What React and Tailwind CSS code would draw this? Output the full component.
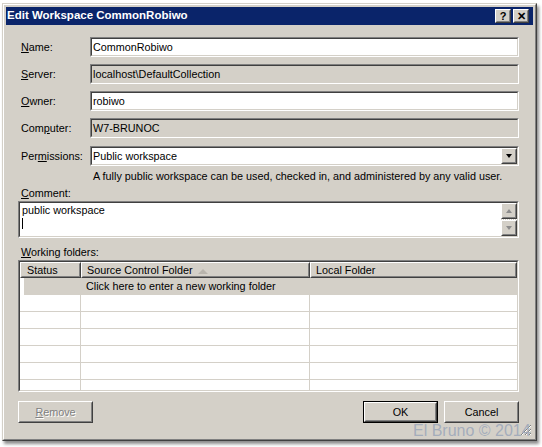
import React from 'react';

function Sunken({ className = '', inner = '', children }) {
  return (
    <div className={`border border-t-[#808080] border-l-[#808080] border-b-white border-r-white ${className}`}>
      <div className={`h-full border border-t-[#404040] border-l-[#404040] border-b-[#d4d0c8] border-r-[#d4d0c8] ${inner}`}>
        {children}
      </div>
    </div>
  );
}

function Raised({ className = '', inner = '', children }) {
  return (
    <div className={`border border-t-white border-l-white border-b-[#404040] border-r-[#404040] bg-[#d4d0c8] ${className}`}>
      <div className={`h-full border border-t-[#d4d0c8] border-l-[#d4d0c8] border-b-[#808080] border-r-[#808080] ${inner}`}>
        {children}
      </div>
    </div>
  );
}

function Field({ label, value, disabled, dropdown, mt }) {
  return (
    <div className={`flex items-center h-[20px] ${mt}`}>
      <div className="w-[72px] pl-[3px]">{label}</div>
      <Sunken className="flex-1 h-[20px]" inner={`flex items-center ${disabled ? 'bg-[#d4d0c8]' : 'bg-white'}`}>
        <span className="flex-1 pl-[1px] whitespace-nowrap">{value}</span>
        {dropdown && (
          <Raised className="w-[16px] h-full" inner="flex items-center justify-center">
            <div className="w-0 h-0 border-l-[3.5px] border-r-[3.5px] border-t-[4px] border-l-transparent border-r-transparent border-t-black" />
          </Raised>
        )}
      </Sunken>
    </div>
  );
}

function ScrollArrow({ up }) {
  return (
    <Raised className="w-[16px] h-[16px]" inner="flex items-center justify-center">
      <div
        className={`w-0 h-0 border-l-[3.5px] border-r-[3.5px] border-l-transparent border-r-transparent ${
          up ? 'border-b-[4px] border-b-[#8c8c8c]' : 'border-t-[4px] border-t-[#8c8c8c]'
        }`}
      />
    </Raised>
  );
}

export default function App() {
  const rows = [0, 1, 2, 3, 4];

  return (
    <div className="relative w-[542px] h-[447px] overflow-hidden bg-white text-[10.8px] text-black font-['Liberation_Sans',Arial,sans-serif]">
      {/* Window */}
      <div className="ml-[2px] mt-[3px] w-[535px] h-[438px] border border-t-[#d4d0c8] border-l-[#d4d0c8] border-b-[#404040] border-r-[#404040] shadow-[2px_3px_3px_rgba(0,0,0,0.45)]">
        <div className="h-full flex flex-col border border-t-white border-l-white border-b-[#808080] border-r-[#808080] bg-[#d4d0c8] p-[2px]">
          {/* Title bar */}
          <div className="h-[18px] bg-[#0a246a] flex items-center pl-[1px] pr-[4px]">
            <span className="flex-1 text-white font-bold text-[11.5px] whitespace-nowrap">Edit Workspace CommonRobiwo</span>
            <Raised className="w-[16px] h-[14px]" inner="flex items-center justify-center font-bold text-[11px] leading-none">?</Raised>
            <Raised className="ml-[2px] w-[16px] h-[14px]" inner="flex items-center justify-center font-bold text-[11px] leading-none">✕</Raised>
          </div>

          {/* Body */}
          <div className="relative flex-1 flex flex-col pt-[12px] pl-[12px] pr-[14px]">
            <Field label={<><u>N</u>ame:</>} value="CommonRobiwo" />
            <Field mt="mt-[7px]" disabled label={<><u>S</u>erver:</>} value="localhost\DefaultCollection" />
            <Field mt="mt-[7px]" label={<><u>O</u>wner:</>} value="robiwo" />
            <Field mt="mt-[7px]" disabled label={<>Com<u>p</u>uter:</>} value="W7-BRUNOC" />
            <Field mt="mt-[8px]" dropdown label={<>Per<u>m</u>issions:</>} value="Public workspace" />

            <div className="mt-[3px] h-[14px] leading-[14px] pl-[75px] whitespace-nowrap">
              A fully public workspace can be used, checked in, and administered by any valid user.
            </div>

            <div className="mt-[3px] h-[14px] leading-[14px] pl-[3px]">
              <u>C</u>omment:
            </div>
            <Sunken className="mt-[1px] h-[37px]" inner="flex bg-white">
              <div className="flex-1 pl-[2px] pt-[1px] leading-[13px]">
                <div>public workspace</div>
                <div className="w-[1px] h-[11px] bg-black mt-[1px]" />
              </div>
              <div className="w-[16px] flex flex-col">
                <ScrollArrow up />
                <div className="flex-1 bg-[repeating-conic-gradient(#ffffff_0_25%,#d4d0c8_0_50%)] bg-[length:2px_2px]" />
                <ScrollArrow />
              </div>
            </Sunken>

            <div className="mt-[7px] h-[14px] leading-[14px] pl-[3px]">
              <u>W</u>orking folders:
            </div>
            <Sunken className="mt-[1px] h-[132px]" inner="flex flex-col bg-white overflow-hidden">
              {/* Header */}
              <div className="flex h-[16px] shrink-0">
                <Raised className="w-[61px]" inner="pl-[5px] leading-[13px]">Status</Raised>
                <Raised className="w-[229px]" inner="relative pl-[4px] leading-[13px]">
                  Source Control Folder
                  <div className="absolute left-[115px] top-[5px] w-0 h-0 border-l-[5px] border-r-[5px] border-b-[5px] border-l-transparent border-r-transparent border-b-[#b8b4ac]" />
                </Raised>
                <Raised className="flex-1" inner="pl-[4px] leading-[13px]">Local Folder</Raised>
              </div>
              {/* New row */}
              <div className="flex h-[17px] shrink-0">
                <div className="w-[4px] bg-white" />
                <div className="flex-1 bg-[#d4d0c8] pl-[62px] leading-[17px] whitespace-nowrap">
                  Click here to enter a new working folder
                </div>
              </div>
              {rows.map((r) => (
                <div key={r} className="flex h-[17px] shrink-0 border-b border-[#d4d0c8]">
                  <div className="w-[61px] border-r border-[#d4d0c8]" />
                  <div className="w-[229px] border-r border-[#d4d0c8]" />
                  <div className="flex-1" />
                </div>
              ))}
              <div className="flex flex-1">
                <div className="w-[61px] border-r border-[#d4d0c8]" />
                <div className="w-[229px] border-r border-[#d4d0c8]" />
                <div className="flex-1" />
              </div>
            </Sunken>

            {/* Buttons */}
            <div className="mt-[9px] flex h-[22px]">
              <Raised className="w-[75px] h-[22px]" inner="flex items-center justify-center text-[#808080] [text-shadow:1px_1px_0_#ffffff]">
                <span><u>R</u>emove</span>
              </Raised>
              <div className="flex-1" />
              <div className="w-[75px] h-[22px] border border-black">
                <Raised className="h-full" inner="flex items-center justify-center">OK</Raised>
              </div>
              <Raised className="ml-[6px] w-[75px] h-[22px]" inner="flex items-center justify-center">Cancel</Raised>
            </div>

            {/* Resize grip */}
            <svg className="absolute right-[1px] bottom-[1px]" width="12" height="12" viewBox="0 0 12 12">
              <path d="M11 1 L1 11 M11 5 L5 11 M11 9 L9 11" stroke="#808080" strokeWidth="1" />
              <path d="M11 2 L2 11 M11 6 L6 11 M11 10 L10 11" stroke="#ffffff" strokeWidth="1" />
            </svg>
          </div>
        </div>
      </div>

      {/* Watermark */}
      <div className="absolute left-[413px] top-[422px] text-[16px] leading-[18px] text-[#9ea8ba]/90 whitespace-nowrap font-['Liberation_Sans',Arial,sans-serif]">
        El Bruno © 2014
      </div>
    </div>
  );
}
